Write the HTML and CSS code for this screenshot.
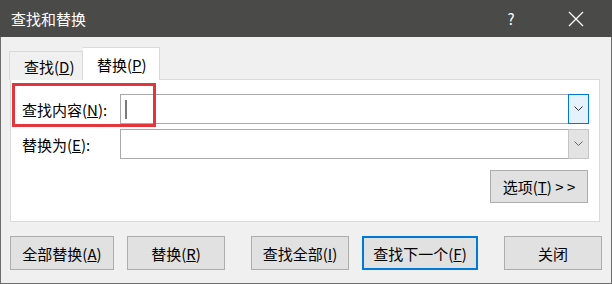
FILE: index.html
```html
<!DOCTYPE html>
<html lang="zh-CN">
<head>
    <meta charset="UTF-8">
    <meta name="viewport" content="width=device-width, initial-scale=1.0">
    <title>查找和替换</title>
    <link rel="stylesheet" href="styles.css">
</head>
<body>
    <div class="window">
        <div class="titlebar">
            <span class="title">查找和替换</span>
            <span class="help">?</span>
            <span class="close">
                <svg width="16" height="16" viewBox="0 0 16 16">
                    <path d="M1 1 L15 15 M15 1 L1 15" stroke="#fff" stroke-width="1.3" fill="none"/>
                </svg>
            </span>
        </div>

        <div class="content">
            <div class="tabs">
                <div class="tab">查找(<u>D</u>)</div>
                <div class="tab active">替换(<u>P</u>)</div>
            </div>

            <div class="panel">
                <div class="row">
                    <label class="label" for="findWhat">查找内容(<u>N</u>):</label>
                    <div class="combo">
                        <div class="combo-input" id="findWhat"><span class="caret"></span></div>
                        <div class="combo-btn focus">
                            <svg width="9" height="6" viewBox="0 0 9 6"><path d="M0.5 0.5 L4.5 4.5 L8.5 0.5" stroke="#333" fill="none"/></svg>
                        </div>
                    </div>
                </div>
                <div class="row">
                    <label class="label" for="replaceWith">替换为(<u>E</u>):</label>
                    <div class="combo">
                        <div class="combo-input" id="replaceWith"></div>
                        <div class="combo-btn">
                            <svg width="9" height="6" viewBox="0 0 9 6"><path d="M0.5 0.5 L4.5 4.5 L8.5 0.5" stroke="#666" fill="none"/></svg>
                        </div>
                    </div>
                </div>
                <div class="options-row">
                    <button class="btn options">选项(<u>T</u>) &gt; &gt;</button>
                </div>

                <div class="highlight"></div>
            </div>

            <div class="actions">
                <button class="btn w104">全部替换(<u>A</u>)</button>
                <button class="btn">替换(<u>R</u>)</button>
                <button class="btn gap-l">查找全部(<u>I</u>)</button>
                <button class="btn default">查找下一个(<u>F</u>)</button>
                <button class="btn gap-l">关闭</button>
            </div>
        </div>
    </div>
</body>
</html>
```

FILE: styles.css
```css
body {
    margin: 0;
    padding: 0;
    font-family: "Noto Sans CJK SC", "Noto Sans", sans-serif;
    font-size: 15px;
    color: #000;
    background: #f0f0f0;
}

.window {
    width: 612px;
    height: 284px;
    box-sizing: border-box;
    border: 1px solid #6e6e6e;
    border-top: none;
    background: #f0f0f0;
    display: flex;
    flex-direction: column;
}

.titlebar {
    height: 37px;
    margin: 0 -1px;
    background: #4a4a48;
    color: #fff;
    display: flex;
    align-items: center;
    padding-left: 11px;
    flex-shrink: 0;
}

.title {
    flex: 1;
    font-size: 15px;
}

.help {
    width: 14px;
    font-size: 15px;
    margin-right: 50px;
    text-align: center;
}

.close {
    display: flex;
    margin-right: 28px;
}

.content {
    padding: 11px 0 0 8px;
    position: relative;
}

.tabs {
    display: flex;
    align-items: flex-end;
    height: 32px;
    position: relative;
    z-index: 1;
    margin-bottom: -1px;
}

.tab {
    height: 29px;
    box-sizing: border-box;
    padding: 0 0 0 14px;
    width: 74px;
    border: 1px solid #d9d9d9;
    border-bottom: none;
    background: #f0f0f0;
    display: flex;
    align-items: center;
}

.tab.active {
    height: 33px;
    width: 77px;
    padding-left: 14px;
    background: #fff;
    border-left: none;
}

.panel {
    position: relative;
    width: 590px;
    height: 143px;
    margin-left: 1px;
    box-sizing: border-box;
    background: #fff;
    border: 1px solid #d9d9d9;
    padding: 14px 10px 0 11px;
}

.row {
    display: flex;
    align-items: center;
    height: 30px;
    margin-bottom: 5px;
}

.label {
    width: 98px;
}

.combo {
    flex: 1;
    display: flex;
    height: 30px;
    box-sizing: border-box;
    border: 1px solid #a9a9a9;
}

.combo-input {
    flex: 1;
    display: flex;
    align-items: center;
    padding-left: 4px;
}

.caret {
    width: 2px;
    height: 19px;
    background: #7a7a7a;
}

.combo-btn {
    width: 21px;
    margin: -1px -1px -1px 0;
    box-sizing: border-box;
    border: 1px solid #c4c4c4;
    background: #e3e3e3;
    display: flex;
    align-items: center;
    justify-content: center;
}

.combo-btn.focus {
    background: #e5f1fb;
    border-color: #0078d7;
}

.options-row {
    display: flex;
    justify-content: flex-end;
    margin-top: 11px;
    padding-right: 1px;
}

.btn {
    font-family: inherit;
    font-size: 15px;
    color: #000;
    background: #e1e1e1;
    border: 1px solid #adadad;
    width: 98px;
    height: 34px;
    padding: 0;
    margin: 0;
    box-sizing: border-box;
}

.options {
    height: 33px;
}

.highlight {
    position: absolute;
    left: 1px;
    top: 3px;
    width: 144px;
    height: 44px;
    box-sizing: border-box;
    border: 3px solid #e2363c;
}

.actions {
    display: flex;
    margin-top: 14px;
    margin-left: 1px;
    gap: 13px;
}

.w104 {
    width: 104px;
}

.gap-l {
    margin-left: 13px;
}

.default {
    width: 116px;
    border: 2px solid #0078d7;
}
```
